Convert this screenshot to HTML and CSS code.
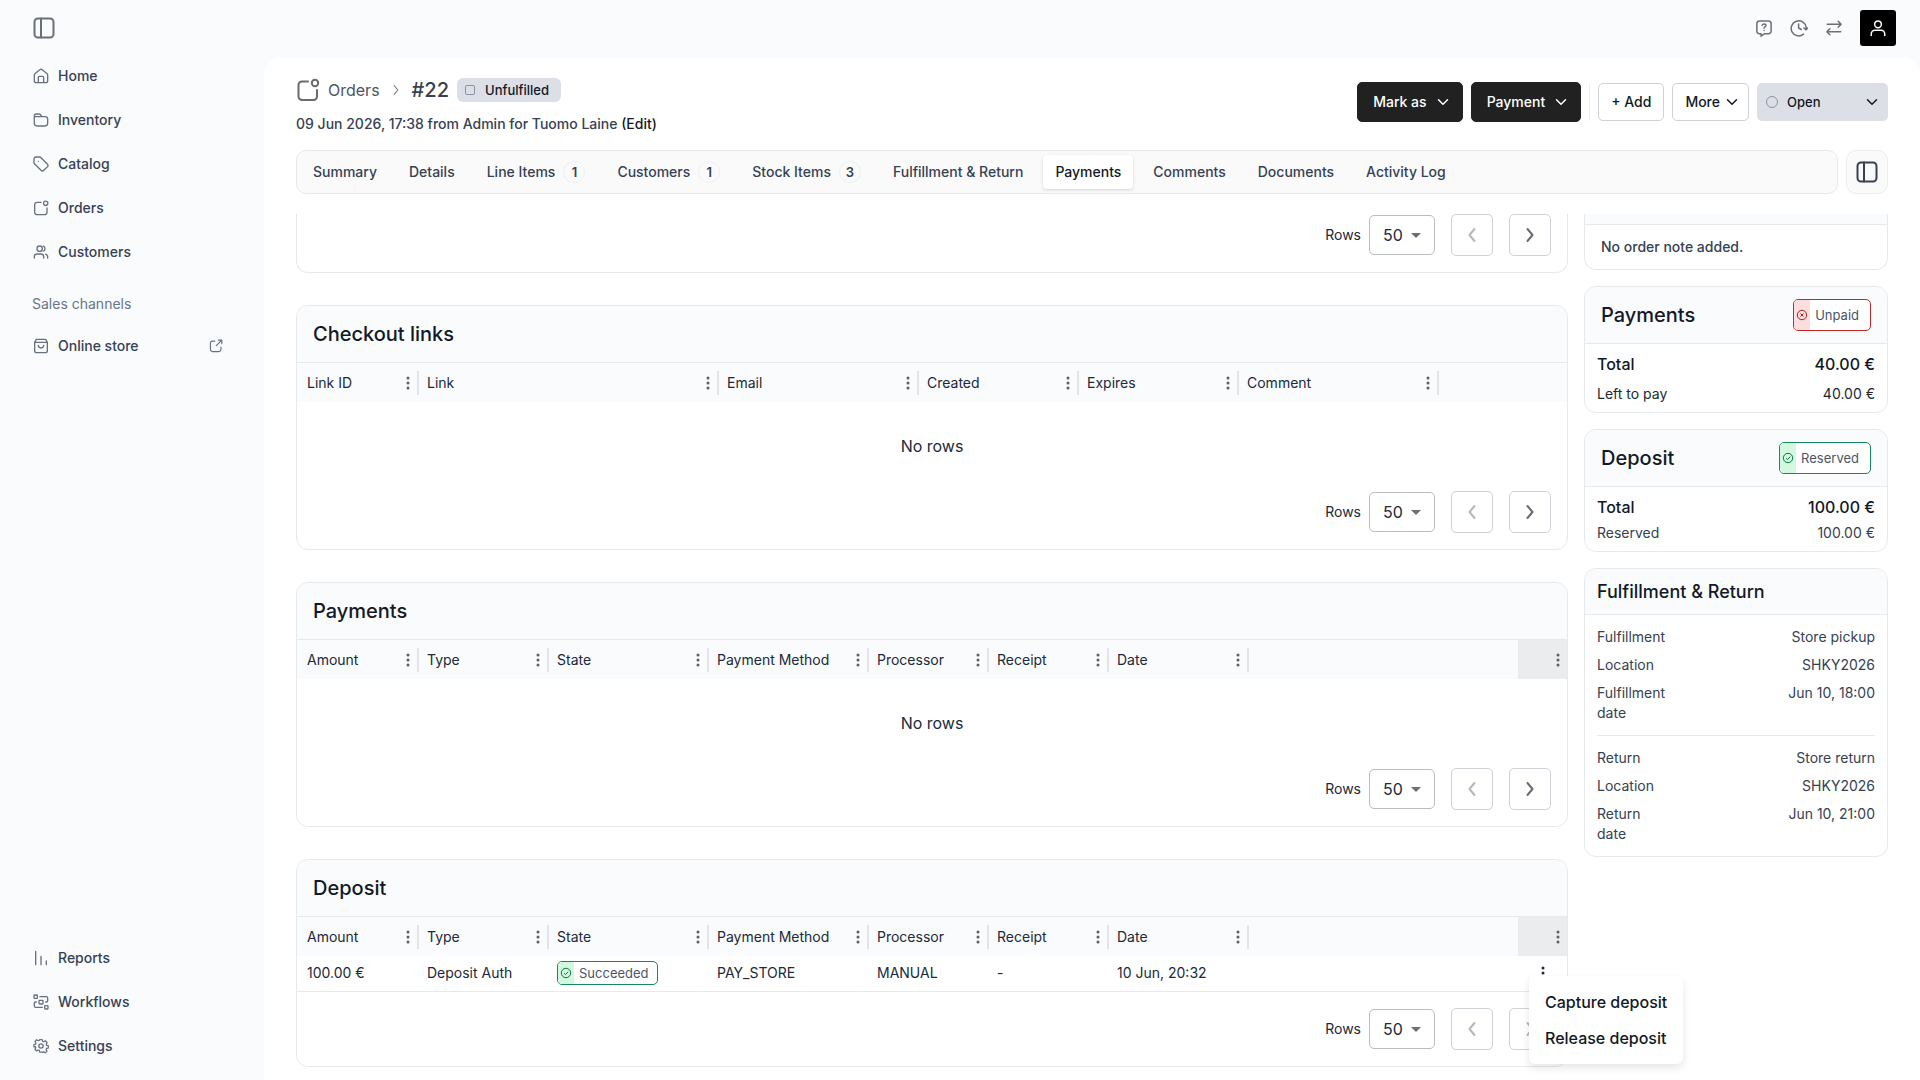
FILE: index.html
```html
<!DOCTYPE html>
<html lang="en">
<head>
    <meta charset="UTF-8">
    <meta name="viewport" content="width=device-width, initial-scale=1.0">
    <title>Order #22</title>
    <link rel="stylesheet" href="styles.css">
</head>
<body>
    <!-- shared icons -->
    <svg class="sprite" aria-hidden="true">
        <symbol id="i-panel" viewBox="0 0 24 24"><rect x="2.5" y="2.5" width="19" height="19" rx="3.5"/><path d="M9 2.5v19"/></symbol>
        <symbol id="i-home" viewBox="0 0 24 24"><path d="M8 22v-8a1.500 1.500 0 0 1 1.500-1.500h5A1.500 1.500 0 0 1 16 14v8M2 10.500c0-1 .4-1.700 1.200-2.400l7-5.600c1.100-.8 2.500-.8 3.600 0l7 5.600c.8.700 1.200 1.400 1.200 2.400V19a3 3 0 0 1-3 3H5a3 3 0 0 1-3-3z"/></symbol>
        <symbol id="i-folder" viewBox="0 0 24 24"><path d="M13 7l-1.200-2.300C11.300 3.600 10.700 3 9.500 3H5a3 3 0 0 0-3 3v1h16a4 4 0 0 1 4 4v6a4 4 0 0 1-4 4H6a4 4 0 0 1-4-4V7"/></symbol>
        <symbol id="i-tag" viewBox="0 0 24 24"><path d="M8 8h.01M1.500 4.500v5c0 1 .3 1.800 1 2.500l9.500 9.500c1.300 1.300 3 1.300 4.300 0l5.200-5.200c1.300-1.300 1.300-3 0-4.300L12 2.500c-.7-.7-1.500-1-2.500-1h-5a3 3 0 0 0-3 3z"/></symbol>
        <symbol id="i-orders" viewBox="0 0 24 24"><path d="M12 3.500H6A3.500 3.500 0 0 0 2.500 7v11.500A3.500 3.500 0 0 0 6 22h11.500a3.500 3.500 0 0 0 3.500-3.500V12"/><circle cx="19" cy="5" r="3.200"/></symbol>
        <symbol id="i-users" viewBox="0 0 24 24"><path d="M2 21v-2a4 4 0 0 1 4-4h6a4 4 0 0 1 4 4v2M22 21v-2a4 4 0 0 0-3-3.900M15.500 3.300a4 4 0 0 1 0 7.400"/><circle cx="10" cy="7" r="4"/></symbol>
        <symbol id="i-bag" viewBox="0 0 24 24"><path d="M16 11a4 4 0 0 1-8 0M3 6.500h18M5 2h14l2.500 4.500V19a3 3 0 0 1-3 3h-13a3 3 0 0 1-3-3V6.500z"/></symbol>
        <symbol id="i-ext" viewBox="0 0 24 24"><path d="M22 8V2h-6M22 2L12.500 11.500M10 3.500H6A3.500 3.500 0 0 0 2.500 7v11A3.500 3.500 0 0 0 6 21.500h11a3.500 3.500 0 0 0 3.500-3.500v-4"/></symbol>
        <symbol id="i-bars" viewBox="0 0 24 24"><path d="M4 2v20M12 9.500V22M20 16.500V22"/></symbol>
        <symbol id="i-flow" viewBox="0 0 24 24"><rect x="1.500" y="1.500" width="5" height="5" rx="1"/><rect x="9" y="9.500" width="6" height="5.500" rx="1"/><rect x="17.500" y="17.500" width="5" height="5" rx="1"/><path d="M10.500 4H20a2 2 0 0 1 2 2v4a2 2 0 0 1-2 2h-1M14 20H4a2 2 0 0 1-2-2v-4a2 2 0 0 1 2-2h1"/></symbol>
        <symbol id="i-gear" viewBox="0 0 24 24"><circle cx="12" cy="12" r="3.200"/><path d="M10 2h4l.6 2.700 1.900.8 2.400-1.500 2.800 2.900-1.500 2.300.7 1.900 2.600.6v3.800l-2.700.6-.8 1.800 1.500 2.400-2.800 2.700-2.300-1.500-1.900.7L14 22h-4l-.6-2.800-1.900-.7L5.200 20l-2.800-2.700 1.500-2.400-.8-1.800L.8 13.500V10l2.500-.6.7-1.900L2.500 5l2.700-2.700 2.400 1.500 1.800-.6z" transform="translate(.6 .4) scale(.95)"/></symbol>
        <symbol id="i-help" viewBox="0 0 24 24"><path d="M2.500 6A3.500 3.500 0 0 1 6 2.500h12A3.500 3.500 0 0 1 21.500 6v10a3.500 3.500 0 0 1-3.500 3.500h-5L8 22.800v-3.300H6A3.500 3.500 0 0 1 2.500 16zM9.500 8.500c.4-1.300 1.300-2 2.600-2 1.500 0 2.500.9 2.500 2.200 0 1.800-2.500 2-2.500 3.500M12.100 15.200v.1"/></symbol>
        <symbol id="i-clock" viewBox="0 0 24 24"><path d="M18 20.200A10 10 0 1 1 21.500 11v2.500M18.500 12l3 2.500 2-2.500M11.500 6.500V12l3.500 2"/></symbol>
        <symbol id="i-swap" viewBox="0 0 24 24"><path d="M3 7h18M17.500 3L21.500 7l-4 4M21 17H3M6.500 13l-4 4 4 4"/></symbol>
        <symbol id="i-user" viewBox="0 0 24 24"><circle cx="12" cy="7" r="4.500"/><path d="M3 22v-2a5 5 0 0 1 5-5h8a5 5 0 0 1 5 5v2"/></symbol>
        <symbol id="i-down" viewBox="0 0 16 16"><path d="M3.500 5.800L8 10.300l4.500-4.500"/></symbol>
        <symbol id="i-left" viewBox="0 0 16 16"><path d="M10.500 2L5.500 8l5 6"/></symbol>
        <symbol id="i-right" viewBox="0 0 16 16"><path d="M5.500 2l5 6-5 6"/></symbol>
        <symbol id="i-dots" viewBox="0 0 4 14"><circle cx="2" cy="2" r="1.500"/><circle cx="2" cy="7" r="1.500"/><circle cx="2" cy="12" r="1.500"/></symbol>
        <symbol id="i-ok" viewBox="0 0 12 12"><circle cx="6" cy="6" r="4.700"/><path d="M4 6.200l1.500 1.400L8.200 4.700"/></symbol>
        <symbol id="i-bad" viewBox="0 0 12 12"><circle cx="6" cy="6" r="4.700"/><path d="M4.500 4.500l3 3M7.500 4.500l-3 3"/></symbol>
    </svg>

    <div class="app">
        <aside class="sidebar">
            <button class="icon-btn side-toggle" aria-label="Toggle sidebar"><svg class="icon lg"><use href="#i-panel"/></svg></button>
            <nav class="side-nav">
                <a href="#"><svg class="icon"><use href="#i-home"/></svg>Home</a>
                <a href="#"><svg class="icon"><use href="#i-folder"/></svg>Inventory</a>
                <a href="#"><svg class="icon"><use href="#i-tag"/></svg>Catalog</a>
                <a href="#"><svg class="icon"><use href="#i-orders"/></svg>Orders</a>
                <a href="#"><svg class="icon"><use href="#i-users"/></svg>Customers</a>
            </nav>
            <p class="side-label">Sales channels</p>
            <nav class="side-nav">
                <a href="#"><svg class="icon"><use href="#i-bag"/></svg>Online store<svg class="icon ext"><use href="#i-ext"/></svg></a>
            </nav>
            <nav class="side-nav side-bottom">
                <a href="#"><svg class="icon"><use href="#i-bars"/></svg>Reports</a>
                <a href="#"><svg class="icon"><use href="#i-flow"/></svg>Workflows</a>
                <a href="#"><svg class="icon"><use href="#i-gear"/></svg>Settings</a>
            </nav>
        </aside>

        <div class="page">
            <header class="topbar">
                <button class="icon-btn" aria-label="Help"><svg class="icon md"><use href="#i-help"/></svg></button>
                <button class="icon-btn" aria-label="History"><svg class="icon md"><use href="#i-clock"/></svg></button>
                <button class="icon-btn" aria-label="Switch"><svg class="icon md"><use href="#i-swap"/></svg></button>
                <button class="avatar" aria-label="Account"><svg class="icon md"><use href="#i-user"/></svg></button>
            </header>

            <main class="panel">
                <div class="order-head">
                    <div class="order-title">
                        <div class="crumbs">
                            <svg class="icon xl"><use href="#i-orders"/></svg>
                            <a href="#">Orders</a>
                            <svg class="icon sm"><use href="#i-right"/></svg>
                            <h1>#22</h1>
                            <span class="state-badge"><i class="square"></i>Unfulfilled</span>
                        </div>
                        <p class="order-sub">09 Jun 2026, 17:38 from Admin for Tuomo Laine <a href="#">(Edit)</a></p>
                    </div>
                    <div class="actions">
                        <button class="btn dark">Mark as<svg class="icon chev"><use href="#i-down"/></svg></button>
                        <button class="btn dark">Payment<svg class="icon chev"><use href="#i-down"/></svg></button>
                        <span class="sep"></span>
                        <button class="btn">+ Add</button>
                        <button class="btn more">More<svg class="icon chev"><use href="#i-down"/></svg></button>
                        <div class="status">
                            <i class="ring"></i>
                            <select aria-label="Order status"><option>Open</option></select>
                            <svg class="icon chev"><use href="#i-down"/></svg>
                        </div>
                    </div>
                </div>

                <div class="tab-row">
                    <nav class="tabs">
                        <a href="#">Summary</a>
                        <a href="#">Details</a>
                        <a href="#">Line Items<span class="count">1</span></a>
                        <a href="#">Customers<span class="count">1</span></a>
                        <a href="#">Stock Items<span class="count">3</span></a>
                        <a href="#">Fulfillment &amp; Return</a>
                        <a href="#" class="active">Payments</a>
                        <a href="#">Comments</a>
                        <a href="#">Documents</a>
                        <a href="#">Activity Log</a>
                    </nav>
                    <button class="panel-toggle" aria-label="Toggle details"><svg class="icon lg"><use href="#i-panel"/></svg></button>
                </div>

                <div class="content">
                    <div class="main-col">
                        <section class="card tail">
                            <div class="pager">
                                <label for="rows1">Rows</label>
                                <span class="rows"><select id="rows1"><option>50</option></select></span>
                                <button disabled aria-label="Previous page"><svg class="icon"><use href="#i-left"/></svg></button>
                                <button aria-label="Next page"><svg class="icon"><use href="#i-right"/></svg></button>
                            </div>
                        </section>

                        <section class="card">
                            <h2>Checkout links</h2>
                            <table>
                                <colgroup><col class="w120"><col class="w300"><col class="w200"><col class="w160"><col class="w160"><col class="w200"><col></colgroup>
                                <thead>
                                    <tr>
                                        <th><div>Link ID<svg class="dots"><use href="#i-dots"/></svg></div></th>
                                        <th><div>Link<svg class="dots"><use href="#i-dots"/></svg></div></th>
                                        <th><div>Email<svg class="dots"><use href="#i-dots"/></svg></div></th>
                                        <th><div>Created<svg class="dots"><use href="#i-dots"/></svg></div></th>
                                        <th><div>Expires<svg class="dots"><use href="#i-dots"/></svg></div></th>
                                        <th><div>Comment<svg class="dots"><use href="#i-dots"/></svg></div></th>
                                        <th><div></div></th>
                                    </tr>
                                </thead>
                            </table>
                            <p class="empty">No rows</p>
                            <div class="pager">
                                <label for="rows2">Rows</label>
                                <span class="rows"><select id="rows2"><option>50</option></select></span>
                                <button disabled aria-label="Previous page"><svg class="icon"><use href="#i-left"/></svg></button>
                                <button aria-label="Next page"><svg class="icon"><use href="#i-right"/></svg></button>
                            </div>
                        </section>

                        <section class="card">
                            <h2>Payments</h2>
                            <table>
                                <colgroup><col class="w120"><col class="w130"><col class="w160"><col class="w160"><col class="w120"><col class="w120"><col class="w140"><col><col class="w49"></colgroup>
                                <thead>
                                    <tr>
                                        <th><div>Amount<svg class="dots"><use href="#i-dots"/></svg></div></th>
                                        <th><div>Type<svg class="dots"><use href="#i-dots"/></svg></div></th>
                                        <th><div>State<svg class="dots"><use href="#i-dots"/></svg></div></th>
                                        <th><div>Payment Method<svg class="dots"><use href="#i-dots"/></svg></div></th>
                                        <th><div>Processor<svg class="dots"><use href="#i-dots"/></svg></div></th>
                                        <th><div>Receipt<svg class="dots"><use href="#i-dots"/></svg></div></th>
                                        <th><div>Date<svg class="dots"><use href="#i-dots"/></svg></div></th>
                                        <th><div></div></th>
                                        <th class="pinned"><div><svg class="dots"><use href="#i-dots"/></svg></div></th>
                                    </tr>
                                </thead>
                            </table>
                            <p class="empty">No rows</p>
                            <div class="pager">
                                <label for="rows3">Rows</label>
                                <span class="rows"><select id="rows3"><option>50</option></select></span>
                                <button disabled aria-label="Previous page"><svg class="icon"><use href="#i-left"/></svg></button>
                                <button aria-label="Next page"><svg class="icon"><use href="#i-right"/></svg></button>
                            </div>
                        </section>

                        <section class="card">
                            <h2>Deposit</h2>
                            <table class="filled">
                                <colgroup><col class="w120"><col class="w130"><col class="w160"><col class="w160"><col class="w120"><col class="w120"><col class="w140"><col><col class="w49"></colgroup>
                                <thead>
                                    <tr>
                                        <th><div>Amount<svg class="dots"><use href="#i-dots"/></svg></div></th>
                                        <th><div>Type<svg class="dots"><use href="#i-dots"/></svg></div></th>
                                        <th><div>State<svg class="dots"><use href="#i-dots"/></svg></div></th>
                                        <th><div>Payment Method<svg class="dots"><use href="#i-dots"/></svg></div></th>
                                        <th><div>Processor<svg class="dots"><use href="#i-dots"/></svg></div></th>
                                        <th><div>Receipt<svg class="dots"><use href="#i-dots"/></svg></div></th>
                                        <th><div>Date<svg class="dots"><use href="#i-dots"/></svg></div></th>
                                        <th><div></div></th>
                                        <th class="pinned"><div><svg class="dots"><use href="#i-dots"/></svg></div></th>
                                    </tr>
                                </thead>
                                <tbody>
                                    <tr>
                                        <td>100.00 €</td>
                                        <td>Deposit Auth</td>
                                        <td><span class="chip ok small"><b><svg><use href="#i-ok"/></svg></b>Succeeded</span></td>
                                        <td>PAY_STORE</td>
                                        <td>MANUAL</td>
                                        <td>-</td>
                                        <td>10 Jun, 20:32</td>
                                        <td></td>
                                        <td class="row-menu">
                                            <button class="kebab" aria-label="Row actions"><svg class="dots"><use href="#i-dots"/></svg></button>
                                            <div class="menu">
                                                <button>Capture deposit</button>
                                                <button>Release deposit</button>
                                            </div>
                                        </td>
                                    </tr>
                                </tbody>
                            </table>
                            <div class="pager">
                                <label for="rows4">Rows</label>
                                <span class="rows"><select id="rows4"><option>50</option></select></span>
                                <button disabled aria-label="Previous page"><svg class="icon"><use href="#i-left"/></svg></button>
                                <button disabled aria-label="Next page"><svg class="icon"><use href="#i-right"/></svg></button>
                            </div>
                        </section>
                    </div>

                    <div class="side-col">
                        <section class="card tail note">
                            <div class="note-head"></div>
                            <p>No order note added.</p>
                        </section>

                        <section class="card">
                            <h2>Payments <span class="chip bad"><b><svg><use href="#i-bad"/></svg></b>Unpaid</span></h2>
                            <div class="sums">
                                <div class="total"><span>Total</span><span>40.00 €</span></div>
                                <div class="left"><span>Left to pay</span><span>40.00 €</span></div>
                            </div>
                        </section>

                        <section class="card">
                            <h2>Deposit <span class="chip ok"><b><svg><use href="#i-ok"/></svg></b>Reserved</span></h2>
                            <div class="sums">
                                <div class="total"><span>Total</span><span>100.00 €</span></div>
                                <div><span>Reserved</span><span>100.00 €</span></div>
                            </div>
                        </section>

                        <section class="card">
                            <h3>Fulfillment &amp; Return</h3>
                            <dl>
                                <div><dt>Fulfillment</dt><dd>Store pickup</dd></div>
                                <div><dt>Location</dt><dd>SHKY2026</dd></div>
                                <div><dt>Fulfillment date</dt><dd>Jun 10, 18:00</dd></div>
                            </dl>
                            <dl>
                                <div><dt>Return</dt><dd>Store return</dd></div>
                                <div><dt>Location</dt><dd>SHKY2026</dd></div>
                                <div><dt>Return date</dt><dd>Jun 10, 21:00</dd></div>
                            </dl>
                        </section>
                    </div>
                </div>
            </main>
        </div>
    </div>
</body>
</html>
```

FILE: styles.css
```css
*
{
    box-sizing: border-box;
    margin: 0;
    padding: 0;
}
body
{
    font-family: Inter, "Liberation Sans", sans-serif;
    font-size: 14px;
    line-height: 20px;
    color: #364152;
    background-color: #fafbfd;
}
a
{
    color: inherit;
    text-decoration: none;
}
button, select
{
    font: inherit;
    color: inherit;
    background: none;
    border: none;
    cursor: pointer;
}
select
{
    appearance: none;
}
.sprite
{
    position: absolute;
    width: 0;
    height: 0;
}
.icon
{
    width: 16px;
    height: 16px;
    flex: none;
    fill: none;
    stroke: currentColor;
    stroke-width: 2;
    stroke-linecap: round;
    stroke-linejoin: round;
}
.icon.sm { width: 12px; height: 12px; stroke-width: 1.5; }
.icon.md { width: 18px; height: 18px; }
.icon.lg { width: 24px; height: 24px; }
.icon.xl { width: 24px; height: 24px; }
.icon.chev { stroke-width: 1.5; }

.app
{
    display: flex;
    height: 100vh;
}

/* sidebar */
.sidebar
{
    width: 264px;
    flex: none;
    display: flex;
    flex-direction: column;
    padding: 16px 32px 12px;
}
.icon-btn
{
    display: flex;
    color: #6b6f76;
}
.side-toggle
{
    align-self: flex-start;
    margin-bottom: 14px;
}
.side-nav a
{
    display: flex;
    align-items: center;
    gap: 9px;
    height: 44px;
    font-weight: 500;
}
.side-nav .icon
{
    color: #697080;
    margin-left: 1px;
}
.side-nav .ext
{
    margin-left: auto;
    width: 14px;
    height: 14px;
    margin-right: 9px;
}
.side-label
{
    padding: 20px 0 10px;
    color: #697586;
}
.side-bottom
{
    margin-top: auto;
}

/* top bar */
.page
{
    flex: 1;
    min-width: 0;
    display: flex;
    flex-direction: column;
}
.topbar
{
    display: flex;
    justify-content: flex-end;
    align-items: center;
    gap: 17px;
    height: 58px;
    flex: none;
    padding: 0 24px 2px 0;
}
.avatar
{
    display: flex;
    align-items: center;
    justify-content: center;
    width: 36px;
    height: 36px;
    border-radius: 3px;
    background-color: #000;
    color: #fff;
}

/* order header */
.panel
{
    flex: 1;
    min-height: 0;
    display: flex;
    flex-direction: column;
    padding: 20px 32px 0;
    background-color: #fff;
    border-radius: 16px 16px 0 0;
}
.order-head
{
    display: flex;
    justify-content: space-between;
    align-items: flex-start;
    margin-bottom: 16px;
}
.crumbs
{
    display: flex;
    align-items: center;
    height: 24px;
    margin-bottom: 12px;
    gap: 8px;
    font-size: 16px;
    color: #4b5565;
}
.crumbs .xl
{
    color: #6b6b6b;
}
.crumbs .sm
{
    margin: 0 2px;
    color: #777;
}
.crumbs h1
{
    font-size: 20px;
    font-weight: 500;
    color: #364152;
}
.state-badge
{
    display: flex;
    align-items: center;
    gap: 10px;
    height: 24px;
    padding: 0 12px 0 8px;
    border-radius: 6px;
    background-color: #dcdfe6;
    color: #121926;
    font-size: 13px;
    font-weight: 500;
}
.square
{
    width: 10px;
    height: 10px;
    border: 1px solid #8a93a3;
    border-radius: 2px;
}
.order-sub
{
    font-weight: 500;
}
.order-sub a
{
    color: #16191f;
}
.actions
{
    display: flex;
    align-items: center;
    gap: 8px;
    margin-top: 4px;
}
.btn
{
    display: flex;
    align-items: center;
    height: 38px;
    padding: 0 12px;
    border: 1px solid #cfd2d6;
    border-radius: 5px;
    background-color: #fff;
    color: #121926;
    font-weight: 500;
}
.btn.more
{
    gap: 4px;
    padding-right: 8px;
}
.btn.dark
{
    gap: 8px;
    height: 40px;
    padding: 0 11px 0 15px;
    border-color: #212121;
    background-color: #212121;
    color: #fff;
}
.sep
{
    width: 1px;
    height: 38px;
    background-color: #eceef0;
}
.status
{
    position: relative;
    width: 131px;
    height: 38px;
    color: #121926;
}
.status select
{
    width: 100%;
    height: 100%;
    padding-left: 30px;
    border-radius: 5px;
    background-color: #dcdfe6;
    font-size: 13px;
    font-weight: 500;
}
.status .ring
{
    position: absolute;
    left: 9px;
    top: 13px;
    width: 12px;
    height: 12px;
    border: 1px solid #8a93a3;
    border-radius: 50%;
}
.status .icon
{
    position: absolute;
    right: 8px;
    top: 11px;
    pointer-events: none;
}

/* tabs */
.tab-row
{
    display: flex;
    gap: 8px;
    margin-bottom: 20px;
}
.tabs
{
    flex: 1;
    display: flex;
    align-items: center;
    gap: 8px;
    height: 44px;
    padding: 0 4px;
    border: 1px solid #e6e8ea;
    border-radius: 10px;
    background-color: #fafafb;
}
.tabs a
{
    display: flex;
    align-items: center;
    gap: 8px;
    height: 34px;
    padding: 0 12px;
    border-radius: 4px;
    font-weight: 500;
}
.tabs .active
{
    background-color: #fff;
    color: #121926;
    box-shadow: 0 1px 3px rgba(0, 0, 0, 0.15);
}
.count
{
    width: 22px;
    height: 22px;
    border: 1px solid #eef0f1;
    border-radius: 50%;
    text-align: center;
    font-size: 13px;
    font-weight: 600;
}
.panel-toggle
{
    display: flex;
    align-items: center;
    justify-content: center;
    width: 42px;
    height: 44px;
    border: 1px solid #eceef0;
    border-radius: 10px;
    background-color: #fafafb;
}

/* scrolling content */
.content
{
    flex: 1;
    min-height: 0;
    overflow: hidden;
    display: flex;
    align-items: flex-start;
    gap: 16px;
}
.main-col
{
    flex: 1;
    min-width: 0;
    display: flex;
    flex-direction: column;
    gap: 32px;
}
.side-col
{
    width: 304px;
    flex: none;
    display: flex;
    flex-direction: column;
    gap: 16px;
}
.card
{
    border: 1px solid #e6eaed;
    border-radius: 12px;
    background-color: #fff;
}
.card.tail
{
    border-top: none;
    border-radius: 0 0 12px 12px;
}
.card h2, .card h3
{
    display: flex;
    align-items: center;
    justify-content: space-between;
    height: 57px;
    padding: 0 16px;
    border-bottom: 1px solid #e6eaed;
    border-radius: 12px 12px 0 0;
    background-color: #fafbfd;
    color: #121926;
    font-size: 20px;
    font-weight: 500;
}
.card h3
{
    height: 46px;
    padding: 0 12px;
    font-size: 18px;
}
table
{
    width: 100%;
    table-layout: fixed;
    border-collapse: collapse;
    color: #202939;
}
.filled
{
    margin-bottom: 16px;
}
.w49 { width: 49px; }
.w120 { width: 120px; }
.w130 { width: 130px; }
.w140 { width: 140px; }
.w160 { width: 160px; }
.w200 { width: 200px; }
.w300 { width: 300px; }
th
{
    height: 39px;
    background-color: #fafbfd;
    font-weight: 400;
    text-align: left;
}
th div
{
    display: flex;
    align-items: center;
    justify-content: space-between;
    height: 24px;
    padding: 0 7px 0 10px;
    white-space: nowrap;
}
th + th div
{
    padding-left: 8px;
    border-left: 2px solid #e2e4e7;
}
.dots
{
    width: 4px;
    height: 14px;
    fill: #5b5f66;
}
.pinned
{
    background-color: #ebecee;
}
.pinned.pinned div
{
    justify-content: flex-end;
    border-left: none;
}
td
{
    height: 35px;
    padding-left: 10px;
    border-bottom: 1px solid #e6eaed;
    white-space: nowrap;
}
.empty
{
    height: 89px;
    line-height: 88px;
    text-align: center;
    font-size: 16px;
    color: #202939;
}
.row-menu
{
    position: relative;
    padding: 0;
}
.kebab
{
    display: flex;
    justify-content: center;
    width: 100%;
}
.kebab .dots
{
    fill: #202939;
}
.menu
{
    position: absolute;
    left: 11px;
    top: 20px;
    z-index: 1;
    display: flex;
    flex-direction: column;
    padding: 8px 0;
    border-radius: 6px;
    background-color: #fff;
    box-shadow: 0 4px 8px rgba(0, 0, 0, 0.1);
}
.menu button
{
    height: 36px;
    padding: 0 16px;
    text-align: left;
    font-size: 16px;
    font-weight: 500;
    color: #121926;
}

/* pager */
.pager
{
    display: flex;
    align-items: center;
    justify-content: flex-end;
    gap: 16px;
    padding: 0 16px 16px;
    color: #202939;
}
.pager label
{
    margin-right: -8px;
}
.rows
{
    position: relative;
}
.rows select
{
    display: block;
    width: 66px;
    height: 40px;
    padding-left: 13px;
    border: 1px solid #b9bcc0;
    border-radius: 5px;
    font-size: 16px;
}
.rows::after
{
    content: "";
    position: absolute;
    right: 14px;
    top: 18px;
    border: 5px solid transparent;
    border-top-color: #6b6f76;
    border-bottom: none;
    pointer-events: none;
}
.pager button
{
    display: flex;
    align-items: center;
    justify-content: center;
    width: 42px;
    height: 42px;
    border: 1px solid #cfd2d6;
    border-radius: 5px;
    color: #6b6b6b;
}
.pager button:disabled
{
    color: #b5b7ba;
}

/* status chips */
.chip
{
    display: inline-flex;
    align-items: center;
    height: 32px;
    padding-right: 11px;
    border: 1px solid;
    border-radius: 5px;
    background-color: #fff;
    color: #4b5565;
    font-size: 13px;
    font-weight: 400;
    line-height: 20px;
}
.chip b
{
    display: flex;
    align-items: center;
    justify-content: center;
    align-self: stretch;
    width: 16px;
    margin-right: 5px;
    border-radius: 4px 0 0 4px;
}
.chip svg
{
    width: 12px;
    height: 12px;
    fill: none;
    stroke: currentColor;
}
.chip.bad { border-color: #c62828; }
.chip.bad b { background-color: #fcdede; color: #b71c1c; }
.chip.ok { border-color: #128a5c; }
.chip.ok b { background-color: #d3f8e0; color: #087443; }
.chip.small
{
    height: 24px;
    padding-right: 8px;
    vertical-align: middle;
}

/* right column */
.note-head
{
    height: 11px;
    border-bottom: 1px solid #e6eaed;
    background-color: #fafbfd;
}
.note p
{
    padding: 12px 16px;
    font-weight: 500;
}
.sums
{
    padding: 8px 12px;
}
.sums div
{
    display: flex;
    justify-content: space-between;
    margin-top: 4px;
}
.sums .left
{
    margin-top: 8px;
    color: #202939;
}
.sums .total
{
    margin-top: 0;
    font-size: 16px;
    font-weight: 500;
    line-height: 24px;
    color: #121926;
}
dl
{
    display: flex;
    flex-direction: column;
    gap: 8px;
    margin: 0 12px;
    padding: 12px 0;
}
dl + dl
{
    border-top: 1px solid #e6eaed;
}
dl div
{
    display: flex;
    justify-content: space-between;
}
dt
{
    width: 76px;
}
```
